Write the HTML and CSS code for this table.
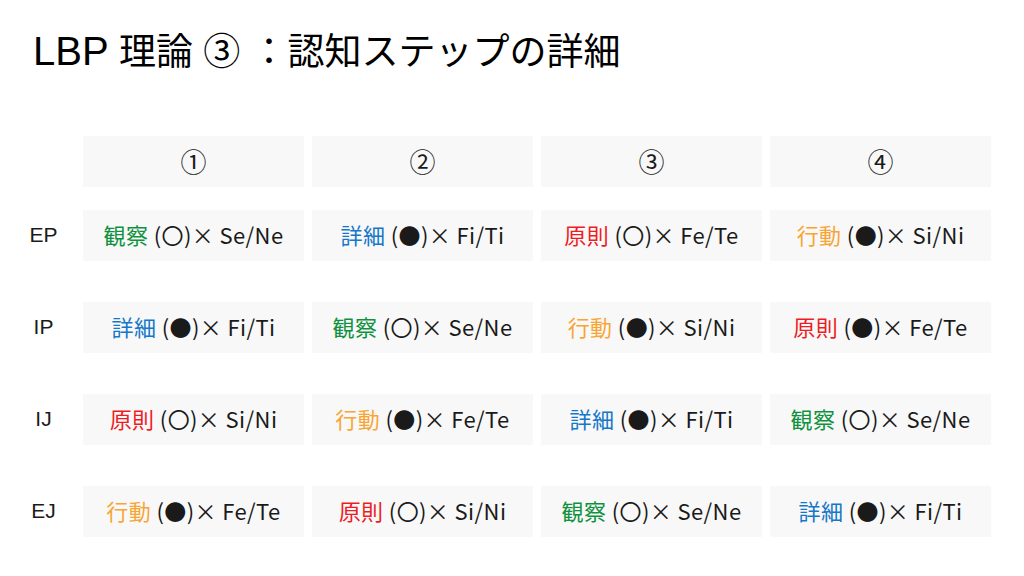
FILE: index.html
```html
<!DOCTYPE html>
<html lang="ja">
<head>
<meta charset="utf-8">
<link rel="stylesheet" href="styles.css">
</head>
<body>
<div class="slide">
  <h1 class="title"><span class="latin">LBP</span> 理論 ③ ：認知ステップの詳細</h1>
  <div class="table">
    <div class="row head">
      <div class="label"></div>
      <div class="cell">①</div>
      <div class="cell">②</div>
      <div class="cell">③</div>
      <div class="cell">④</div>
    </div>
    <div class="body">
      <div class="row">
        <div class="label">EP</div>
        <div class="cell"><span class="g">観察</span> (〇)× Se/Ne</div>
        <div class="cell"><span class="b">詳細</span> (●)× Fi/Ti</div>
        <div class="cell"><span class="r">原則</span> (〇)× Fe/Te</div>
        <div class="cell"><span class="o">行動</span> (●)× Si/Ni</div>
      </div>
      <div class="row">
        <div class="label">IP</div>
        <div class="cell"><span class="b">詳細</span> (●)× Fi/Ti</div>
        <div class="cell"><span class="g">観察</span> (〇)× Se/Ne</div>
        <div class="cell"><span class="o">行動</span> (●)× Si/Ni</div>
        <div class="cell"><span class="r">原則</span> (●)× Fe/Te</div>
      </div>
      <div class="row">
        <div class="label">IJ</div>
        <div class="cell"><span class="r">原則</span> (〇)× Si/Ni</div>
        <div class="cell"><span class="o">行動</span> (●)× Fe/Te</div>
        <div class="cell"><span class="b">詳細</span> (●)× Fi/Ti</div>
        <div class="cell"><span class="g">観察</span> (〇)× Se/Ne</div>
      </div>
      <div class="row">
        <div class="label">EJ</div>
        <div class="cell"><span class="o">行動</span> (●)× Fe/Te</div>
        <div class="cell"><span class="r">原則</span> (〇)× Si/Ni</div>
        <div class="cell"><span class="g">観察</span> (〇)× Se/Ne</div>
        <div class="cell"><span class="b">詳細</span> (●)× Fi/Ti</div>
      </div>
    </div>
  </div>
</div>
</body>
</html>
```
FILE: styles.css
```css
html, body {
  margin: 0;
  padding: 0;
  background: #ffffff;
}
.slide {
  width: 1024px;
  height: 576px;
  box-sizing: border-box;
  padding: 30px 0 0 12px;
  color: #1a1a1a;
  font-family: "Noto Sans CJK JP", "Liberation Sans", sans-serif;
}
.title {
  margin: 0 0 0 21px;
  font-family: "Liberation Sans", "Noto Sans CJK JP", sans-serif;
  font-weight: normal;
  font-size: 37px;
  line-height: 43px;
  height: 43px;
  color: #000;
  white-space: pre;
}
.latin {
  font-size: 40px;
}
.table {
  margin-top: 63px;
  display: flex;
  flex-direction: column;
  gap: 23px;
}
.body {
  display: flex;
  flex-direction: column;
  gap: 41px;
}
.row {
  display: grid;
  grid-template-columns: 63px repeat(4, 221px);
  column-gap: 8px;
  height: 51px;
}
.label {
  display: flex;
  align-items: center;
  justify-content: center;
  font-family: "Liberation Sans", "Noto Sans CJK JP", sans-serif;
  font-size: 21px;
  color: #1a1a1a;
  padding-bottom: 2px;
}
.cell {
  background: #f8f8f8;
  display: flex;
  align-items: center;
  justify-content: center;
  font-size: 22px;
  letter-spacing: 0.4px;
  white-space: pre;
  color: #1a1a1a;
  padding-bottom: 3px;
  box-sizing: border-box;
}
.head .cell {
  font-size: 26px;
  letter-spacing: 0;
}
.g { color: #0f9140; }
.b { color: #1577c8; }
.r { color: #ee1c25; }
.o { color: #f8a534; }
```
